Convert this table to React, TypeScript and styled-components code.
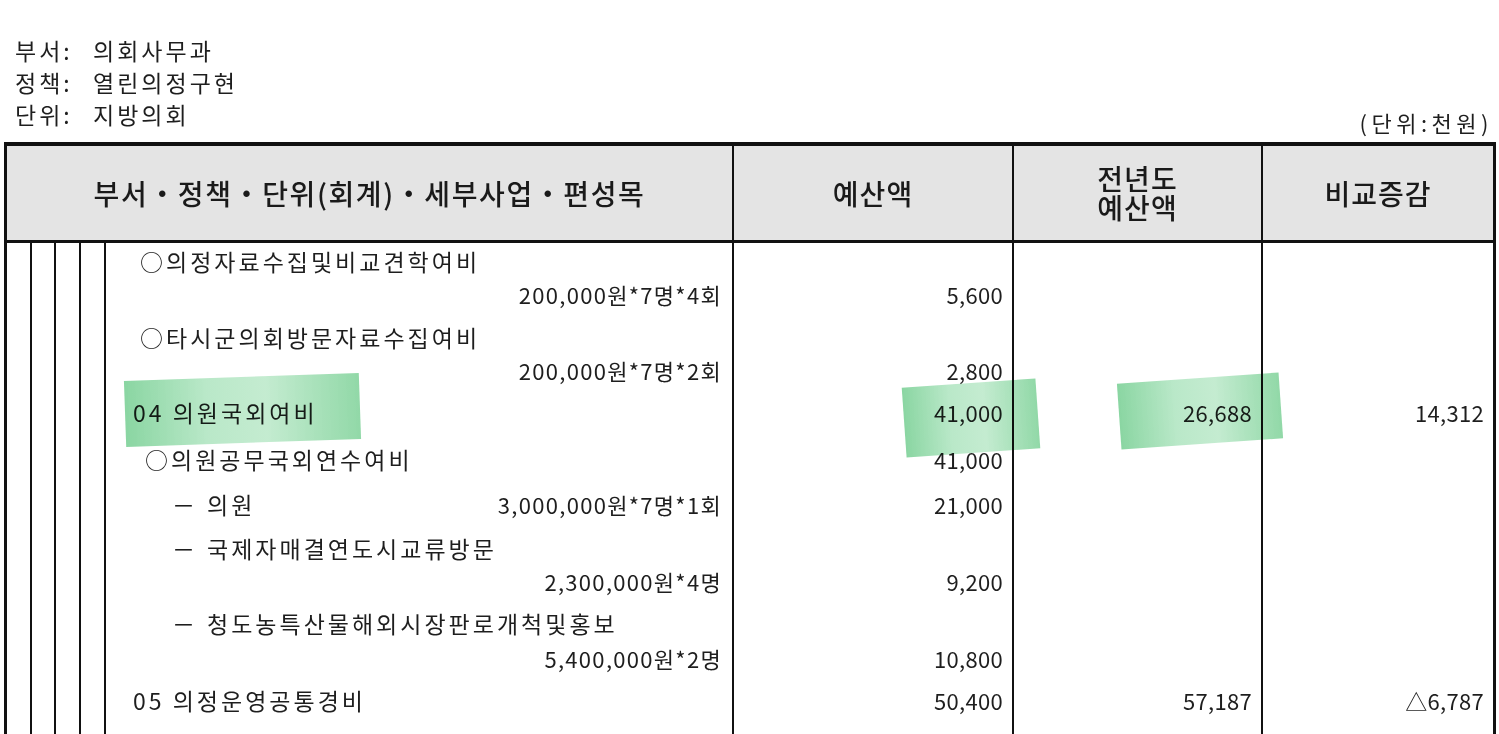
import styled, { createGlobalStyle } from "styled-components"

const GlobalStyle = createGlobalStyle`
  * { box-sizing: border-box; }
  html, body {
    margin: 0;
    padding: 0;
    background: #fff;
    overflow: hidden;
  }
  body {
    font-family: "Noto Sans CJK KR", "Noto Sans", sans-serif;
    color: #1e1e1e;
  }
`

const Page = styled.div`
  width: 1499px;
  height: 734px;
  overflow: hidden;
`

const Top = styled.div`
  display: flex;
  justify-content: space-between;
  align-items: flex-end;
  height: 138px;
  padding: 34px 6px 0 15px;
`

const Info = styled.div`
  display: grid;
  grid-template-columns: 78px auto;
  font-size: 23px;
  line-height: 32px;
  letter-spacing: 3px;
  padding-bottom: 8px;
`

const Unit = styled.div`
  font-size: 22px;
  line-height: 32px;
  letter-spacing: 4.5px;
`

const Table = styled.div`
  display: grid;
  grid-template-columns: 25px 24px 25px 25px 628px 280px 249px 230px;
  width: 1492px;
  margin: 4px 0 0 4px;
  border: 3px solid #111;
  border-top-width: 4px;
  border-bottom: none;
`

const HeadCell = styled.div<{ $span?: number; $last?: boolean }>`
  grid-column: span ${p => p.$span ?? 1};
  height: 97px;
  display: flex;
  flex-direction: column;
  align-items: center;
  justify-content: center;
  text-align: center;
  background: #e4e4e4;
  border-bottom: 3px solid #111;
  border-right: ${p => (p.$last ? "none" : "2px solid #111")};
  font-size: 28px;
  font-weight: 500;
  line-height: 30px;
  letter-spacing: 1px;
  color: #1a1a1a;
`

const Title = styled.span`
  letter-spacing: 1.6px;
`

const HeadLine = styled.span`
  display: block;
  height: 29px;
  line-height: 29px;
`

const Strip = styled.div<{ $h: number }>`
  height: ${p => p.$h}px;
  border-right: 2px solid #111;
`

const Content = styled.div<{ $h: number; $pad: number; $indent: number; $split?: boolean; $end?: boolean }>`
  position: relative;
  height: ${p => p.$h}px;
  display: flex;
  align-items: flex-start;
  justify-content: ${p => (p.$split ? "space-between" : p.$end ? "flex-end" : "flex-start")};
  padding: ${p => p.$pad}px 10px 0 ${p => p.$indent}px;
  border-right: 2px solid #111;
  font-size: 23px;
  line-height: 26px;
  letter-spacing: 3px;
  white-space: nowrap;
`

const Num = styled.div<{ $h: number; $pad: number; $last?: boolean }>`
  position: relative;
  height: ${p => p.$h}px;
  padding: ${p => p.$pad}px 9px 0 0;
  text-align: right;
  border-right: ${p => (p.$last ? "none" : "2px solid #111")};
  font-size: 22px;
  line-height: 26px;
  letter-spacing: 0.3px;
  white-space: nowrap;
`

const Calc = styled.span`
  font-size: 22px;
  letter-spacing: 1.3px;
`

const Dash = styled.span`
  display: inline-block;
  width: 35px;
  letter-spacing: 0;
`

const Label = styled.span`
  position: relative;
  z-index: 2;
`

const Mark = styled.span<{ $l: number; $t: number; $w: number; $hh: number; $rot: number }>`
  position: absolute;
  left: ${p => p.$l}px;
  top: ${p => p.$t}px;
  width: ${p => p.$w}px;
  height: ${p => p.$hh}px;
  transform: rotate(${p => p.$rot}deg);
  background: linear-gradient(
    90deg,
    rgba(128, 210, 154, 0.92) 0%,
    rgba(176, 229, 193, 0.88) 35%,
    rgba(188, 233, 202, 0.88) 60%,
    rgba(136, 213, 160, 0.92) 100%
  );
  mix-blend-mode: multiply;
  z-index: 3;
  pointer-events: none;
`

type MarkSpec = { l: number; t: number; w: number; h: number; rot: number }

type Row = {
  h: number
  pad?: number
  indent?: number
  text?: string
  dash?: boolean
  calc?: string
  budget?: string
  prev?: string
  diff?: string
  markText?: MarkSpec
  markBudget?: MarkSpec
  markPrev?: MarkSpec
}

const rows: Row[] = [
  { h: 35, pad: 5, indent: 34, text: "○의정자료수집및비교견학여비" },
  { h: 43, calc: "200,000원*7명*4회", budget: "5,600" },
  { h: 33, indent: 34, text: "○타시군의회방문자료수집여비" },
  { h: 42, calc: "200,000원*7명*2회", budget: "2,800" },
  {
    h: 47,
    indent: 27,
    text: "04 의원국외여비",
    budget: "41,000",
    prev: "26,688",
    diff: "14,312",
    markText: { l: 19, t: -19, w: 235, h: 66, rot: -2 },
    markBudget: { l: 170, t: -13, w: 134, h: 70, rot: -4 },
    markPrev: { l: 105, t: -18, w: 162, h: 66, rot: -4 },
  },
  { h: 45, indent: 39, text: "○의원공무국외연수여비", budget: "41,000" },
  { h: 44, indent: 66, dash: true, text: "의원", calc: "3,000,000원*7명*1회", budget: "21,000" },
  { h: 33, indent: 66, dash: true, text: "국제자매결연도시교류방문" },
  { h: 42, calc: "2,300,000원*4명", budget: "9,200" },
  { h: 35, indent: 66, dash: true, text: "청도농특산물해외시장판로개척및홍보" },
  { h: 42, calc: "5,400,000원*2명", budget: "10,800" },
  { h: 50, indent: 27, text: "05 의정운영공통경비", budget: "50,400", prev: "57,187", diff: "△6,787" },
]

const toMark = (m?: MarkSpec) =>
  m ? <Mark $l={m.l} $t={m.t} $w={m.w} $hh={m.h} $rot={m.rot} /> : null

const BodyRow = ({ row }: { row: Row }) => {
  const pad = row.pad ?? 3
  return (
    <>
      <Strip $h={row.h} />
      <Strip $h={row.h} />
      <Strip $h={row.h} />
      <Strip $h={row.h} />
      <Content
        $h={row.h}
        $pad={pad}
        $indent={row.indent ?? 0}
        $split={!!row.text && !!row.calc}
        $end={!row.text && !!row.calc}
      >
        {row.text && (
          <Label>
            {row.dash && <Dash>－</Dash>}
            {row.text}
          </Label>
        )}
        {row.calc && <Calc>{row.calc}</Calc>}
        {toMark(row.markText)}
      </Content>
      <Num $h={row.h} $pad={pad}>
        {row.budget}
        {toMark(row.markBudget)}
      </Num>
      <Num $h={row.h} $pad={pad}>
        {row.prev}
        {toMark(row.markPrev)}
      </Num>
      <Num $h={row.h} $pad={pad} $last>
        {row.diff}
      </Num>
    </>
  )
}

const App = () => {
  return (
    <Page>
      <GlobalStyle />
      <Top>
        <Info>
          <span>부서:</span>
          <span>의회사무과</span>
          <span>정책:</span>
          <span>열린의정구현</span>
          <span>단위:</span>
          <span>지방의회</span>
        </Info>
        <Unit>(단위:천원)</Unit>
      </Top>
      <Table>
        <HeadCell $span={5}>
          <Title>부서・정책・단위(회계)・세부사업・편성목</Title>
        </HeadCell>
        <HeadCell>예산액</HeadCell>
        <HeadCell>
          <HeadLine>전년도</HeadLine>
          <HeadLine>예산액</HeadLine>
        </HeadCell>
        <HeadCell $last>비교증감</HeadCell>
        {rows.map((row, key) => (
          <BodyRow key={key} row={row} />
        ))}
      </Table>
    </Page>
  )
}

export default App
